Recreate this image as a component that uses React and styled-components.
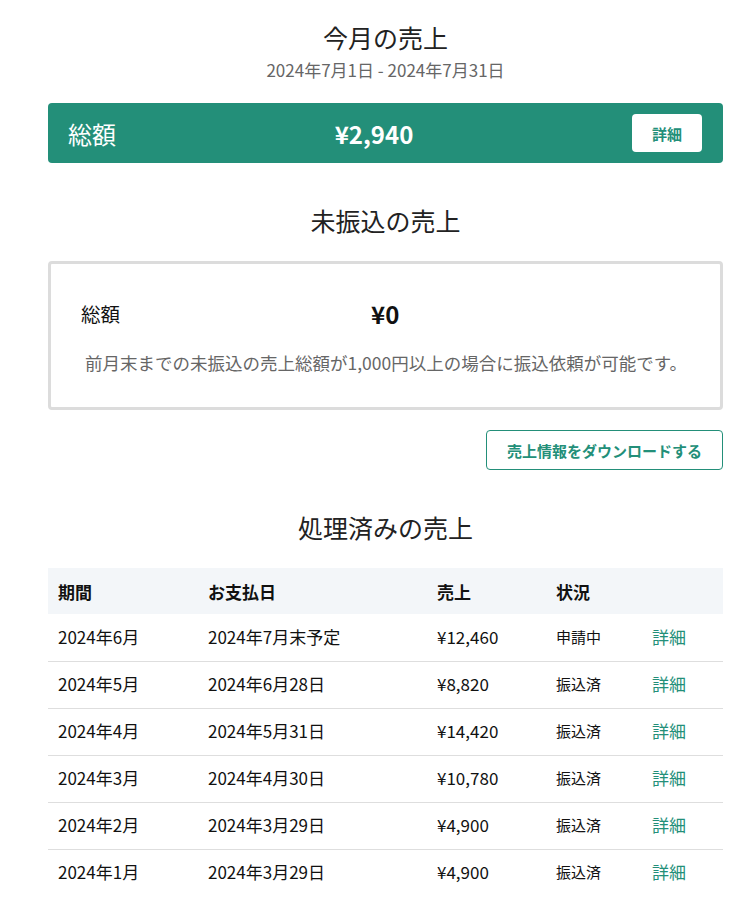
import React from "react";
import styled, { createGlobalStyle } from "styled-components";

const GREEN = "#238f79";
const FONT = `"Noto Sans CJK JP", "Noto Sans", sans-serif`;

const Global = createGlobalStyle`
  body { margin: 0; background: #fff; font-family: ${FONT}; color: #1a1a1a; }
  * { box-sizing: border-box; }
`;

const Page = styled.div`
  padding: 19px 25px 20px 48px;
  display: flex;
  flex-direction: column;
`;

const Title = styled.h2`
  margin: ${(p) => p.$mt || 0}px 0 0;
  padding-bottom: 4px;
  text-align: center;
  font-size: 25px;
  font-weight: 400;
  line-height: 36px;
  color: #222;
`;

const SubTitle = styled.div`
  text-align: center;
  font-size: 17px;
  line-height: 22px;
  margin-bottom: 2px;
  color: #666;
`;

const TotalBar = styled.div`
  margin-top: 20px;
  height: 60px;
  background: ${GREEN};
  border-radius: 4px;
  display: flex;
  justify-content: space-between;
  align-items: center;
  padding: 0 21px 0 20px;
  color: #fff;
`;

const BarLabel = styled.div`
  font-size: 24px;
`;

const BarAmount = styled.div`
  font-size: 24px;
  font-weight: 700;
`;

const WhiteButton = styled.button`
  width: 70px;
  height: 38px;
  background: #fff;
  border: none;
  border-radius: 4px;
  color: ${GREEN};
  font-family: ${FONT};
  font-weight: 700;
  font-size: 15px;
`;

const Box = styled.div`
  margin-top: 19px;
  border: 3px solid #dcdcdc;
  border-radius: 4px;
  padding: 31px 30px 31px 30px;
`;

const BoxRow = styled.div`
  display: grid;
  grid-template-columns: 290px auto;
  align-items: center;
  height: 36px;
`;

const BoxLabel = styled.div`
  font-size: 19.5px;
  color: #111;
`;

const BoxAmount = styled.div`
  font-size: 24px;
  font-weight: 700;
  color: #111;
`;

const Note = styled.p`
  margin: 19px 0 0;
  padding-left: 4px;
  font-size: 17.5px;
  line-height: 26px;
  color: #666;
  white-space: nowrap;
`;

const Actions = styled.div`
  display: flex;
  justify-content: flex-end;
  margin-top: 20px;
`;

const OutlineButton = styled.button`
  height: 40px;
  width: 237px;
  background: #fff;
  border: 1px solid ${GREEN};
  border-radius: 4px;
  color: ${GREEN};
  font-family: ${FONT};
  font-weight: 700;
  font-size: 15px;
`;

const Table = styled.table`
  margin-top: 19px;
  width: 100%;
  border-collapse: collapse;
`;

const Th = styled.th`
  background: #f3f6f9;
  height: 46px;
  text-align: left;
  padding: 0 10px;
  font-weight: 700;
  font-size: 17px;
  color: #111;
  width: ${(p) => p.$w || "auto"};
`;

const Tr = styled.tr`
  border-bottom: ${(p) => (p.$last ? "none" : "1px solid #dedede")};
`;

const Td = styled.td`
  height: 47px;
  padding: 0 10px 2px;
  color: #111;
  font-size: ${(p) => (p.$small ? "15px" : "17px")};
  white-space: nowrap;
`;

const DetailLink = styled.a`
  color: ${GREEN};
  font-size: 17px;
  text-decoration: none;
  cursor: pointer;
`;

const rows = [
  ["2024年6月", "2024年7月末予定", "¥12,460", "申請中"],
  ["2024年5月", "2024年6月28日", "¥8,820", "振込済"],
  ["2024年4月", "2024年5月31日", "¥14,420", "振込済"],
  ["2024年3月", "2024年4月30日", "¥10,780", "振込済"],
  ["2024年2月", "2024年3月29日", "¥4,900", "振込済"],
  ["2024年1月", "2024年3月29日", "¥4,900", "振込済"],
];

export default function App() {
  return (
    <>
      <Global />
      <Page>
        <Title>今月の売上</Title>
        <SubTitle>2024年7月1日 - 2024年7月31日</SubTitle>
        <TotalBar>
          <BarLabel>総額</BarLabel>
          <BarAmount>¥2,940</BarAmount>
          <WhiteButton>詳細</WhiteButton>
        </TotalBar>

        <Title $mt={39}>未振込の売上</Title>
        <Box>
          <BoxRow>
            <BoxLabel>総額</BoxLabel>
            <BoxAmount>¥0</BoxAmount>
          </BoxRow>
          <Note>前月末までの未振込の売上総額が1,000円以上の場合に振込依頼が可能です。</Note>
        </Box>
        <Actions>
          <OutlineButton>売上情報をダウンロードする</OutlineButton>
        </Actions>

        <Title $mt={39}>処理済みの売上</Title>
        <Table>
          <thead>
            <tr>
              <Th $w="150px">期間</Th>
              <Th $w="229px">お支払日</Th>
              <Th $w="119px">売上</Th>
              <Th $w="96px">状況</Th>
              <Th />
            </tr>
          </thead>
          <tbody>
            {rows.map((r, i) => (
              <Tr key={i} $last={i === rows.length - 1}>
                <Td>{r[0]}</Td>
                <Td>{r[1]}</Td>
                <Td>{r[2]}</Td>
                <Td $small>{r[3]}</Td>
                <Td>
                  <DetailLink>詳細</DetailLink>
                </Td>
              </Tr>
            ))}
          </tbody>
        </Table>
      </Page>
    </>
  );
}
